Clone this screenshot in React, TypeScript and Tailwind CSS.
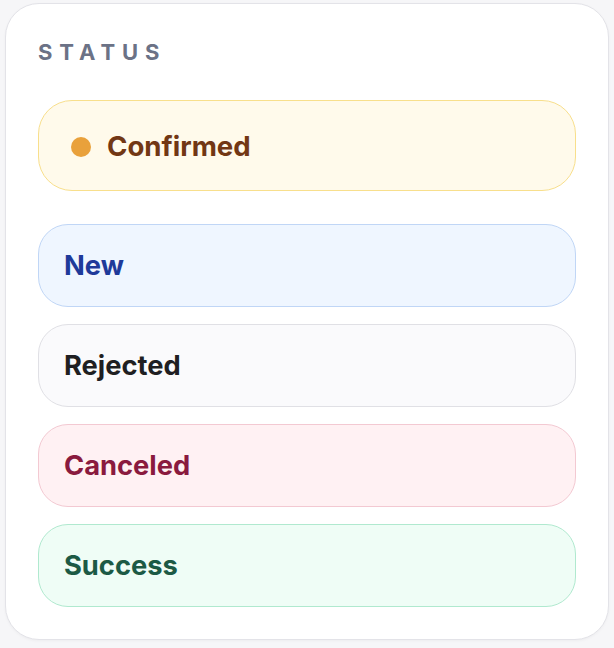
import React from "react";

const items = [
  { label: "New", cls: "bg-[#eff6ff] border-[#c0d6f6] text-[#1e3a9a]" },
  { label: "Rejected", cls: "bg-[#fafafc] border-[#e0e0e5] text-[#1f1f22]" },
  { label: "Canceled", cls: "bg-[#fff1f3] border-[#f3c9d2] text-[#8a1a3e]" },
  { label: "Success", cls: "bg-[#effdf6] border-[#b0e9cf] text-[#1c5a45]" },
];

export default function App() {
  return (
    <div
      className="min-h-[648px] w-full bg-[#f6f6f8] pt-[3px] px-[5px] pb-[7px]"
      style={{ fontFamily: "Inter, 'Noto Sans', sans-serif" }}
    >
      <div className="rounded-[34px] border border-[#e3e3e8] bg-white p-8 shadow-[0_1px_3px_rgba(0,0,0,0.04)]">
        <div className="text-[22px] leading-[32px] font-bold tracking-[0.315em] text-[#6b7286] mb-8">
          STATUS
        </div>
        <div className="flex h-[91px] items-center gap-4 rounded-[34px] border-[1.5px] border-[#f8df8c] bg-[#fffaeb] pl-[32px] pt-[2px]">
          <span className="h-5 w-5 rounded-full bg-[#e9a13b]" />
          <span className="text-[27.6px] font-bold text-[#723714]">Confirmed</span>
        </div>
        <div className="mt-[33px] flex flex-col gap-[17px]">
          {items.map((it) => (
            <div
              key={it.label}
              className={`flex h-[83px] items-center rounded-[30px] border-[1.5px] pl-[25px] pt-[2px] text-[27.3px] font-bold ${it.cls}`}
            >
              {it.label}
            </div>
          ))}
        </div>
      </div>
    </div>
  );
}
